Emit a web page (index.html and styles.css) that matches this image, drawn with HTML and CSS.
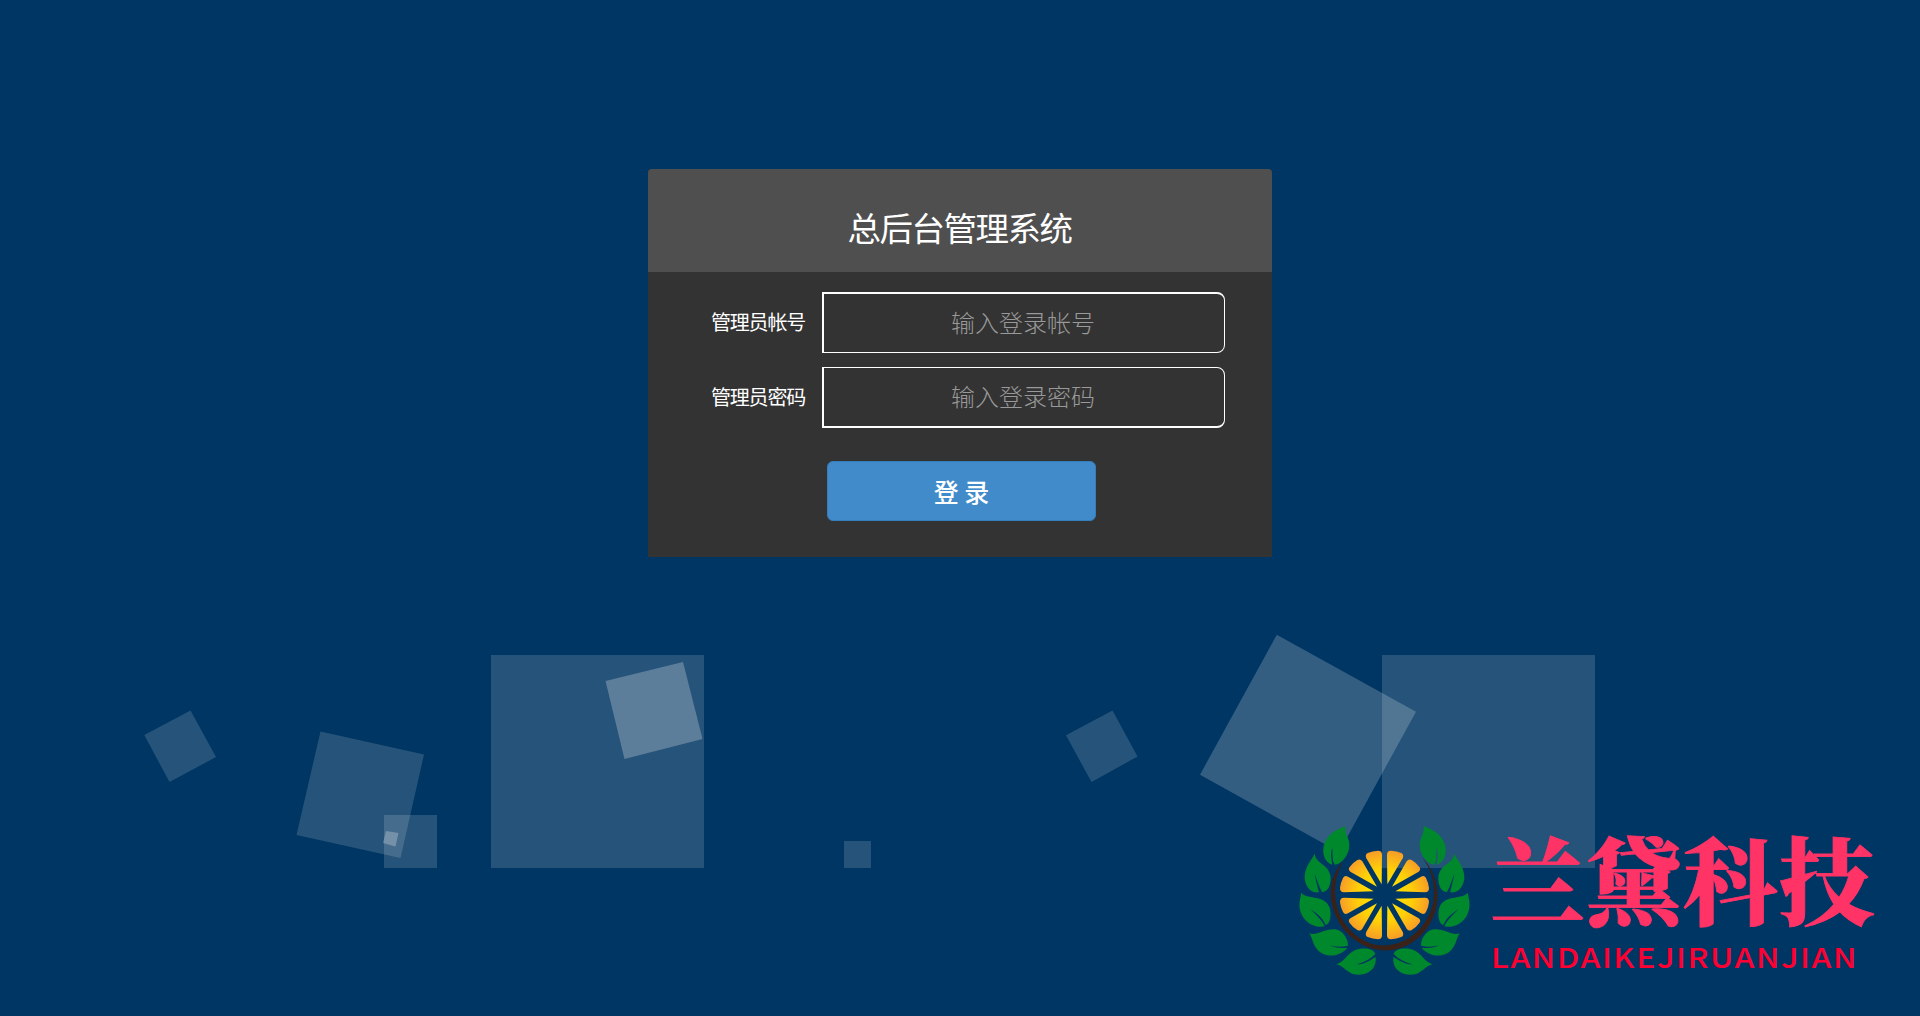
FILE: index.html
```html
<!DOCTYPE html>
<html lang="zh-CN">
<head>
<meta charset="utf-8">
<title>总后台管理系统</title>
<link rel="stylesheet" href="styles.css">
</head>
<body>
<svg class="scene" viewBox="0 0 1920 1016" aria-hidden="true">
  <g class="shapes">
    <path d="M144.3 735 190.5 710.5 216 757 169.5 782Z"/>
    <path d="M320.5 731.5 424 754.500 400.500 858 296.500 835Z"/>
    <path d="M384 815h53v53h-53z"/>
    <path class="strong" d="M386 831 398.500 833 395.500 846.500 383 843Z"/>
    <path d="M491 655h213v213H491z"/>
    <path class="strong" d="M605.500 681 683 662 702.500 739 624.500 759Z"/>
    <path d="M844 841h27v27h-27z"/>
    <path d="M1066 735.300 1112.500 710.500 1137.500 756.500 1091.500 782Z"/>
    <path class="medium" d="M1276.800 634.700 1416 711.700 1339 852 1200 774.700Z"/>
    <path d="M1382 655h213v213h-213z"/>
  </g>
</svg>
<main class="page">
  <form class="login">
    <h1 class="login-title">总后台管理系统</h1>
    <div class="login-body">
      <div class="field">
        <label for="user">管理员帐号</label>
        <input id="user" class="account" type="text" placeholder="输入登录帐号">
      </div>
      <div class="field">
        <label for="pass">管理员密码</label>
        <input id="pass" class="password" type="password" placeholder="输入登录密码">
      </div>
      <button class="submit" type="button">登 录</button>
    </div>
  </form>
  <footer class="brand">
    <svg class="emblem" viewBox="0 0 570 495" aria-hidden="true">
      <defs>
        <radialGradient id="orange" gradientUnits="userSpaceOnUse" cx="284" cy="225" r="135">
          <stop offset=".25" stop-color="#ffe100"/><stop offset=".6" stop-color="#ffcf08"/><stop offset="1" stop-color="#f79c28"/>
        </radialGradient>
        <path id="slice" d="M292 193 291 104Q291 92 303 92Q320 93 334 99Q343 104 338 115Z"/>
        <path id="slice2" d="M306 200 350 124Q356 115 365 120Q380 129 388 141Q394 149 386 155Z"/>
        <path id="slice3" d="M316 214 393 170Q403 164 408 174Q416 190 417 204Q417 217 405 217Z"/>
        <g id="quarter"><use href="#slice"/><use href="#slice2"/><use href="#slice3"/></g>
        <g id="leaves">
          <path d="M166 19C151 25 118 35 104 68C94 94 101 126 127 134C124 115 121 99 127 84C128 104 126 121 134 134C153 133 177 106 178 77C179 54 164 45 166 19Z"/>
          <path d="M74 101C65 120 42 142 44 176C48 207 69 220 87 217C80 192 77 178 74 161C82 181 87 201 96 216C112 216 122 199 122 173C119 132 79 134 74 101Z"/>
          <path d="M34 218C31 237 23 254 34 281C45 310 80 325 104 319C93 296 77 284 61 267C84 283 98 294 107 315C121 311 125 284 119 263C105 222 51 240 34 218Z"/>
          <path d="M58 340C68 354 66 370 83 390C101 410 133 411 153 399C164 392 169 388 172 383C149 386 132 382 118 376C136 381 155 382 174 377C174 355 158 332 136 328C106 324 82 348 58 340Z"/>
          <path d="M138 433C158 436 164 451 186 461C216 471 247 457 254 436C258 425 258 416 256 411C238 423 221 434 200 433C223 427 242 417 256 402C252 388 230 383 207 387C170 395 168 426 138 433Z"/>
        </g>
      </defs>
      <path class="ring" d="M159 124C98 190 119 292 181 349C246 407 333 404 391 348C453 288 464 188 398 113C451 187 441 281 379 336C322 389 244 390 189 338C127 281 121 193 159 124Z"/>
      <g fill="url(#orange)">
        <use href="#quarter"/>
        <use href="#quarter" transform="translate(567)scale(-1 1)"/>
        <use href="#quarter" transform="translate(0 450)scale(1 -1)"/>
        <use href="#quarter" transform="translate(567 450)scale(-1 -1)"/>
      </g>
      <g fill="#00882d">
        <use href="#leaves"/>
        <use href="#leaves" transform="translate(567)scale(-1 1)"/>
      </g>
    </svg>
    <svg class="wordmark" viewBox="0 0 400 165">
      <text class="brand-name" x="10" y="98" textLength="384">兰黛科技</text>
      <text class="brand-latin" transform="translate(11 147.500)scale(1.16 1)" textLength="315">LANDAIKEJIRUANJIAN</text>
    </svg>
  </footer>
</main>
</body>
</html>
```

FILE: styles.css
```css
* { box-sizing: border-box; }
body {
  margin: 0;
  height: 1016px;
  overflow: hidden;
  background: #003663;
  font-family: "Microsoft YaHei", "Noto Sans CJK SC", sans-serif;
}
.scene { position: absolute; inset: 0; width: 1920px; height: 1016px; }
.shapes { fill: rgba(255, 255, 255, .15); }
.shapes .medium { fill: rgba(255, 255, 255, .2); }
.shapes .strong { fill: rgba(255, 255, 255, .25); }
.page {
  position: relative;
  height: 1016px;
  padding-top: 169px;
  display: flex;
  flex-direction: column;
  align-items: center;
}
.login {
  width: 624px;
  height: 388px;
  border-radius: 4px 4px 0 0;
  overflow: hidden;
  background: #333;
  color: #fff;
}
.login-title {
  margin: 0;
  height: 103px;
  padding: 16px 1px 0 0;
  background: #4f4f4f;
  font-size: 33.5px;
  font-weight: 400;
  line-height: 84px;
  letter-spacing: -1.5px;
  text-align: center;
}
.login-body {
  display: flex;
  flex-direction: column;
  gap: 14px;
  padding: 20px 47px 0 63px;
}
.field { display: flex; align-items: center; justify-content: space-between; }
.field label {
  padding-bottom: 2px;
  font-size: 20px;
  letter-spacing: -1.2px;
  line-height: 59px;
}
.field input {
  width: 403px;
  height: 61px;
  padding: 0 2px 3px 0;
  border: 1px solid #fff;
  border-left-width: 2px;
  border-radius: 0 8px 8px 0;
  background: transparent;
  color: #fff;
  font: 300 24px "Noto Sans CJK SC", sans-serif;
  text-align: center;
}
.field .account { border-top-width: 2px; }
.field .password { border-bottom-width: 2px; }
.field input::placeholder { color: #999; opacity: 1; }
.submit {
  width: 269px;
  height: 60px;
  margin: 19px 0 0 116px;
  padding: 0;
  border: 1px solid #357ebd;
  border-radius: 6px;
  background: #428bca;
  color: #fff;
  font: 500 25px "Noto Sans CJK SC", sans-serif;
}
.brand {
  align-self: flex-end;
  display: flex;
  margin: 263px 40px 0 0;
}
.emblem { width: 190px; height: 165px; }
.wordmark { width: 400px; height: 165px; overflow: visible; }
.ring { fill: #3b2219; }
.brand-name {
  fill: #ff3366;
  stroke: #ff3366;
  stroke-width: .8px;
  font: 900 95px "Noto Serif CJK SC", "Noto Sans CJK SC", serif;
}
.brand-latin {
  fill: #ff0033;
  font: 500 27.5px "Noto Sans CJK SC", sans-serif;
}
```
